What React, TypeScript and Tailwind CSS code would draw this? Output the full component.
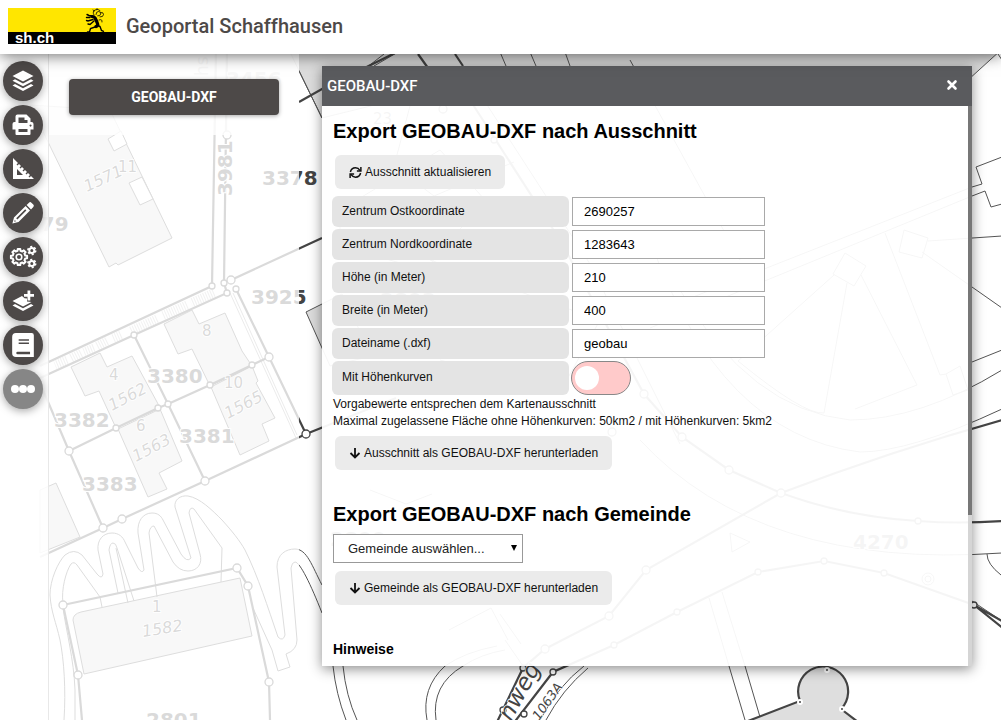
import { useState } from "react";
import type { ReactNode } from "react";

const circles: number[][] = [
  [212, 286, 3], [224, 283, 3], [231, 280, 4], [227, 293, 3], [236, 289, 3],
  [134, 335, 3], [269, 357, 4], [252, 365, 3], [210, 385, 3], [168, 404, 3],
  [158, 408, 3], [116, 428, 3], [69, 451, 4], [205, 481, 4], [122, 519, 4],
  [103, 528, 4], [306, 434, 4], [63, 605, 4], [237, 568, 4], [248, 586, 4],
  [269, 682, 4], [78, 675, 4], [227, 135, 4], [443, 109, 4], [494, 140, 3],
  [682, 437, 4], [729, 470, 4], [781, 493, 4], [918, 521, 3], [545, 649, 4],
  [609, 616, 4], [646, 570, 4], [614, 645, 3], [677, 612, 3], [758, 572, 3],
  [824, 561, 3], [884, 573, 3], [974, 605, 3], [644, 394, 4], [612, 432, 4],
  [523, 668, 3], [553, 672, 3], [503, 710, 3], [524, 714, 3],
];

const parcels: [number, number, string][] = [
  [262, 185, "3378"], [251, 304, "3925"], [147, 383, "3380"], [54, 427, "3382"],
  [179, 443, "3381"], [82, 491, "3383"], [146, 727, "2801"], [853, 549, "4270"],
  [226, 86, "3456"], [330, 546, "2800"], [380, 307, "2803"], [13, 231, "3379"],
];

function ParcelMap() {
  return (
    <svg
      aria-hidden="true"
      className="absolute inset-0 h-full w-full"
      viewBox="0 0 1001 720"
      preserveAspectRatio="xMinYMin slice"
      fontFamily="'DejaVu Sans', sans-serif"
    >
      <g fill="#dcdcdc" stroke="#555" strokeWidth="1">
        <path d="M286 44 322 118 460 84 968 80 1001 50V44Z" />
        <path d="M30 105 109 267l7-4 2 2 54-27-62-128Z" />
        <path d="M164 324l28-14 7 14 26-11 17 38 10 15-42 20-18-37-14 5Z" />
        <path d="M71 367l29-14 7 14 25-11 25 46 3 6-44 20-17-37-14 5Z" />
        <path d="M118 429l42-20 22 52-23 12 8 16-19 8Z" />
        <path d="M211 387l41-21 6 15-2 2 19 35-13 6 7 17-29 14Z" />
        <path d="M40 490l16-7 24 54-40 16Z" />
        <path d="M73 620q0-6 8-8l159-34 12 58-168 38Z" />
        <path d="M306 312l36-18 30 62-42 10Z" />
      </g>
      <g fill="#fff" stroke="#555">
        <path d="M108 139l13-8 6 13-13 7ZM129 183l13-6 11 22-13 6Z" />
      </g>

      <g fill="none" stroke="#555" strokeWidth="1">
        <path d="M230 293l66 145M233 293l64 142" opacity=".6" />
        <path d="M64 720C66 690 64 660 60 640 56 622 51 612 50 595 50 580 58 562 65 555Q74 548 82 555L97 574Q102 580 103 574L98 550C97 540 103 533 112 533 119 533 123 537 125 542L138 568Q142 574 144 570L138 533C137 521 143 513 152 513 158 513 161 516 163 520L181 554Q187 563 191 558L175 507C174 500 180 495 188 496 200 498 212 510 222 520 232 531 240 541 245 550 258 576 268 608 278 637Q283 642 285 635L277 567C277 554 286 549 295 549 307 549 312 566 322 585" />
        <path d="M63 603C61 590 66 571 71 564Q74 561 77 565L100 597 102 607M118 593 109 550Q110 543 113 543T117 548L134 601M116 548 128 603M157 597 149 533Q150 526 154 526L173 562Q179 571 188 571C197 571 203 564 200 554L189 513Q190 506 194 509L222 548 221 582M253 608 272 650 278 671 290 667 286 654Q297 650 297 640L291 568Q292 562 295 562C300 562 311 585 322 613" />
        <path d="M75 720V690C74 660 66 630 63 608" />
        <path d="M333 666q3 28 13 54M343 666q3 30 14 54M427 720q-6-32 18-54 20-14 52-20M436 720q-5-35 27-54 18-12 42-16M505 640l18 26M500 614l21 30M449 630l42-22 17 32M540 720q18-34 44-54M546 720q16-30 42-52" />
        <path d="M729 666l16 54M745 666l15 51M709 598l20 68M722 592l23 74" />
        <path d="M650 314L972 187l10-3-6-17 26-10M650 328L972 196l13-5 6 16 11-3M928 241l74-5M904 230l24 8-6 20-23-6ZM845 253l21 13-12 20-21-12ZM922 252l80 56M834 275l-96 86q66 54 86 52l23-130M861 275l56 110-62 24M885 233l55 142 6-1M946 374l14-8 8 24-15 5ZM972 362l30-12M680 290q70 120 170 130 70 0 152-50M650 240q70 195 210 212 50 0 142-43M640 440q120 130 362 113M987 554q0 10 14 21" />
        <path d="M366 68l18-14M374 66l24-14M500 52l6 14M530 52l6 14M565 52l5 14M299 71l23 47M410 106l-16 60 40 30 80-34M340 210l100-60 45 50-60 70-85-24ZM430 260l170 60-40 72-120-32M370 490l36 14 26-10M480 94l110 170 90 180M630 60l110 200M998 54l4 6M730 533l20 9-18 10ZM972 601l30 20" />
        <circle cx="928" cy="579" r="6" />
        <circle cx="928" cy="579" r="3" />
      </g>

      <g fill="none" stroke="#444" strokeWidth="2.2">
        <path d="M216 50l-4 236L40 366M227 50l-3 233 3 10-93 42-94 43M299 102l23-13 75-37M231 280l91-42" />
        <path d="M236 289l33 68 37 77-101 47-83 38-19 9-63 29M306 434l90-36M269 357l-17 8-42 20-42 19-10 4-42 20-47 23M134 335l34 69 37 77M40 383l29 68 34 77M63 605l174-37 11 18 21 96 1 38M63 605l15 70 4 45" />
        <path d="M418 54l10 14M455 54l8 12M470 100l90 140 84 154 38 43 47 33 52 23q66 24 137 28 40 3 84 0M781 493q110-42 221-73M781 493 646 570l-37 46-64 33-22 19-26 54M513 724l40-52 61-27 63-33 81-40 66-11 60 12 90 32 30 24M974 605l28 16" />
      </g>
      <g stroke="#555" strokeWidth="9" strokeDasharray="1 1.5" opacity=".4">
        <path d="M214 293l-23 10M187 305l-25 11M157 319l-26 12M121 335l-9 4M107 341l-10 5M94 348l-10 4M81 353l-10 5M67 360l-12 5" />
      </g>

      <path d="M750 720l50-19a25 25 0 1 1 42 8l16 12Z" fill="#dedede" />
      <path d="M748 721l52-20a25 25 0 1 1 41 8l17 13" fill="none" stroke="#444" strokeWidth="2.2" />
      <g fill="#444" stroke="#fff" strokeWidth="2">
        <circle cx="800" cy="702" r="2" />
        <circle cx="827" cy="670" r="2" />
        <circle cx="842" cy="709" r="2" />
      </g>

      <g fill="#fff" stroke="#444" strokeWidth="1.3">
        {circles.map(([x, y, r]) => (
          <circle key={`${x}-${y}`} cx={x} cy={y} r={r} />
        ))}
      </g>

      <g fill="#444" fontWeight="bold" fontSize="20" stroke="#fff" strokeWidth="2" paintOrder="stroke">
        {parcels.map(([x, y, label]) => (
          <text key={label} x={x} y={y}>{label}</text>
        ))}
        <text transform="translate(232 196) rotate(-90)">3981</text>
      </g>
      <g fill="#444" fontSize="15" stroke="#fff" strokeWidth="1.5" paintOrder="stroke">
        <text x="118" y="172">11</text>
        <text x="202" y="336">8</text>
        <text x="109" y="380">4</text>
        <text x="136" y="431">6</text>
        <text x="224" y="388">10</text>
        <text x="152" y="612">1</text>
        <text x="373" y="124">23</text>
        <g fontStyle="italic" fontSize="16">
          <text transform="translate(87 192) rotate(-25)">1571</text>
          <text transform="translate(112 411) rotate(-28)">1562</text>
          <text transform="translate(136 462) rotate(-28)">1563</text>
          <text transform="translate(228 419) rotate(-28)">1565</text>
          <text transform="translate(143 637) rotate(-9)">1582</text>
          <text transform="translate(539 721) rotate(-55)" fontSize="13">1063A</text>
        </g>
        <text transform="translate(511 722) rotate(-61)" fontStyle="italic" fontSize="23">nweg</text>
        <text transform="translate(208 76) rotate(-90)" fontSize="17">hs</text>
      </g>
    </svg>
  );
}

function Glyph({ children, className = "size-6" }: { children: ReactNode; className?: string }) {
  return (
    <svg viewBox="0 0 24 24" className={className} fill="currentColor" aria-hidden="true">
      {children}
    </svg>
  );
}

const gear = (cx: number, cy: number, r: number, teeth: number) => {
  const step = (Math.PI * 2) / teeth;
  const points: string[] = [];
  for (let i = 0; i < teeth; i++) {
    [[-0.3, 0.78], [-0.2, 1], [0.2, 1], [0.3, 0.78]].forEach(([turn, size]) => {
      const a = (i + turn) * step;
      points.push(`${(cx + Math.cos(a) * r * size).toFixed(2)},${(cy + Math.sin(a) * r * size).toFixed(2)}`);
    });
  }
  return points.join(" ");
};

const tools: { label: string; icon: ReactNode }[] = [
  {
    label: "Karten",
    icon: (
      <Glyph>
        <path d="M12 1.5 22.5 7 12 12.5 1.5 7Z" />
        <path d="M4 10.3 1.5 11.7 12 17.2l10.5-5.5L20 10.3l-8 4.2ZM4 15 1.5 16.4 12 22l10.5-5.6L20 15l-8 4.3Z" />
      </Glyph>
    ),
  },
  {
    label: "Drucken",
    icon: (
      <Glyph>
        <path
          fillRule="evenodd"
          d="M4.500 9V3.500q0-2 2-2h9l4 4V9h1q2 0 2 2v5.500h-3V21q0 1-1 1h-13q-1 0-1-1v-4.500h-3V11q0-2 2-2ZM7.500 4.500V10h9V7h-3V4.500ZM7.500 16v3h9v-3ZM19.500 11.500a1 1 0 1 0 .1 0Z"
        />
      </Glyph>
    ),
  },
  {
    label: "Messen",
    icon: (
      <Glyph>
        <path
          fillRule="evenodd"
          d="M2 1v21h21l-3-3-1.500 1.500-1-1L19 18l-2-2-1.500 1.500-1-1L16 15l-2-2-1.500 1.500-1-1L13 12l-2-2-1.500 1.500-1-1L10 9 8 7 6.500 8.500l-1-1L7 6ZM6 12l6 6H6Z"
        />
      </Glyph>
    ),
  },
  {
    label: "Zeichnen",
    icon: (
      <Glyph>
        <path d="M15.600 4l4.400 4.400L22.300 6q1.200-1.200 0-2.400l-1.900-1.900q-1.200-1.200-2.400 0Z" />
        <path fillRule="evenodd" d="M14.600 5 3 16.500l-1.600 6.100L7.500 21 19 9.400ZM14.200 8.200l1.200 1.200-9 9-1.200-1.200ZM3.800 19l1.200 1.200-1.800.6Z" />
      </Glyph>
    ),
  },
  {
    label: "Einstellungen",
    icon: (
      <svg viewBox="0 0 28 24" className="h-6 w-7 fill-none stroke-current stroke-2" aria-hidden="true">
        <polygon points={gear(10, 12, 8.2, 8)} strokeLinejoin="round" />
        <circle cx="10" cy="12" r="2.8" strokeWidth="1.600" />
        <circle cx="22.800" cy="5.500" r="2.500" />
        <circle cx="22.800" cy="5.500" r="3.900" strokeDasharray="2.040 2.040" strokeWidth="1.600" />
        <circle cx="22.800" cy="18.500" r="2.500" />
        <circle cx="22.800" cy="18.500" r="3.900" strokeDasharray="2.040 2.040" strokeWidth="1.600" />
      </svg>
    ),
  },
  {
    label: "Ebene hinzufügen",
    icon: (
      <Glyph>
        <path d="M16.500 1.500h2.800V5H23v2.800h-3.700v3.600h-2.800V7.800H13V5h3.500Z" />
        <path d="M11 7l2.500 2.300 2.500.3v3l4.500.4-8.500 4.500L1.500 12Z" />
        <path d="M4 15l-2.500 1.500L12 22l10.500-5.500L20 15l-8 4.300Z" />
      </Glyph>
    ),
  },
  {
    label: "Hilfe",
    icon: (
      <Glyph className="size-[26px]">
        <path
          fillRule="evenodd"
          d="M5.500 1H20q2 0 2 2v20H5.500Q2 23 2 19.500v-15Q2 1 5.500 1ZM7 18.200q-1.200 0-1.200 1.200T7 20.600h11.500v-2.400ZM8 6.800V8h9.500V6.800ZM8 9.800V11h9.500V9.800Z"
        />
      </Glyph>
    ),
  },
  {
    label: "Mehr",
    icon: (
      <Glyph>
        <circle cx="4" cy="12" r="4" />
        <circle cx="12" cy="12" r="4" />
        <circle cx="20" cy="12" r="4" />
      </Glyph>
    ),
  },
];

function Logo() {
  return (
    <a href="#start" aria-label="sh.ch" className="relative block h-9 w-[108px] overflow-hidden bg-[#ffe600]">
      <span className="absolute inset-x-0 bottom-0 h-3 bg-black" />
      <span className="absolute bottom-0 left-[7px] font-['Liberation_Sans',sans-serif] text-[15px] leading-[12px] font-bold text-white">
        sh.ch
      </span>
      <svg viewBox="0 0 22 25" className="absolute top-0 right-[10px] h-[25px] w-[22px]" fill="none" stroke="#000" strokeLinecap="round" aria-hidden="true">
        <path d="M8 8.500q3 0 4 3.500l1.500 3.500q1 2-1.500 3" strokeWidth="3.200" />
        <path d="M9 11.500 4 13l-1.500-.5M10 13l-4 3.500-2-.5M13 17l3 1.500 1.500 4 2 .8M11 19l-4.500 1.500L5.500 24H3.500M8 8 5 7.500 3 6.500M6 9.500 2.500 9.500" strokeWidth="1.400" />
        <path d="M10 7q-2-3.500 1-5 3-1.500 5 .5M10.500 3 9 2M13 1.500V.7M12 6.500q0-3 2.500-3t2.200 2.400-3 2M17 4.500q2.500-.5 2.500 2t-3.500 2.500M15 12q3.500-1.500 3 2" strokeWidth=".8" />
      </svg>
    </a>
  );
}

function DownArrow() {
  return (
    <svg viewBox="0 0 12 12" className="size-3 fill-none stroke-current" strokeWidth="1.800" aria-hidden="true">
      <path d="M6 1v10M1.500 6 6 10.500 10.500 6" />
    </svg>
  );
}

const actionClass =
  "ml-[2px] flex h-[34px] w-fit items-center gap-[3px] rounded-md bg-[#ebebeb] px-[14px] text-xs text-[#111]";

const fields = [
  { id: "ost", label: "Zentrum Ostkoordinate", value: "2690257" },
  { id: "nord", label: "Zentrum Nordkoordinate", value: "1283643" },
  { id: "hoehe", label: "Höhe (in Meter)", value: "210" },
  { id: "breite", label: "Breite (in Meter)", value: "400" },
  { id: "datei", label: "Dateiname (.dxf)", value: "geobau" },
];

function ExportWindow({ onClose }: { onClose: () => void }) {
  return (
    <section
      aria-label="GEOBAU-DXF"
      className="absolute top-3 right-[29px] bottom-[54px] left-[322px] flex flex-col shadow-[0_3px_12px_rgba(0,0,0,0.45)]"
    >
      <header className="flex h-10 shrink-0 items-center justify-between bg-[#5a5b5e] pr-[14px] pl-[5px] text-white">
        <h2 className="text-[15px] font-medium">GEOBAU-DXF</h2>
        <button type="button" aria-label="Schliessen" onClick={onClose} className="pb-[2px]">
          <svg viewBox="0 0 12 12" className="size-3 stroke-current" strokeWidth="2.600" strokeLinecap="round" aria-hidden="true">
            <path d="M2.500 2.500l7 7M9.500 2.500l-7 7" />
          </svg>
        </button>
      </header>
      <div className="flex min-h-0 flex-1">
        <div className="flex-1 overflow-hidden bg-white/95 pt-[11px] pl-[11px] font-['Liberation_Sans',Arial,sans-serif] text-xs text-[#111]">
          <h3 className="text-xl leading-7 font-bold text-black">Export GEOBAU-DXF nach Ausschnitt</h3>
          <button type="button" className={`${actionClass} mt-[10px]`}>
            <svg viewBox="0 0 14 14" className="size-[13px] fill-none stroke-current" strokeWidth="1.600" aria-hidden="true">
              <path d="M1.500 6.500Q2.500 2 7 2q3 0 5 3M12.500 7.500Q11.500 12 7 12q-3 0-5-3" />
              <path d="M12.800 1v4.300H8.500M1.200 13V8.700H5.500" />
            </svg>
            Ausschnitt aktualisieren
          </button>
          <div className="mt-[7px] -ml-px flex flex-col gap-[2px]">
            {fields.map((f) => (
              <div key={f.id} className="flex items-center gap-[3px]">
                <label htmlFor={f.id} className="h-[31px] w-[237px] rounded-md bg-[#e3e3e3]/95 pl-[10px] leading-[30px]">
                  {f.label}
                </label>
                <input
                  id={f.id}
                  defaultValue={f.value}
                  className="h-[29px] w-[193px] border border-[#a9a9a9] bg-white px-[11px] text-[13px] text-black"
                />
              </div>
            ))}
            <div className="flex items-center gap-[2px]">
              <label htmlFor="kurven" className="h-[34px] w-[237px] rounded-md bg-[#e3e3e3]/95 pl-[10px] leading-[32px]">
                Mit Höhenkurven
              </label>
              <input
                id="kurven"
                type="checkbox"
                className="h-[34px] w-[60px] appearance-none rounded-full border border-[#888] bg-[#ffcaca] px-[3px] py-[4px] before:block before:size-6 before:rounded-full before:bg-white checked:bg-[#caffca] checked:before:ml-auto"
              />
            </div>
          </div>
          <p className="pt-px leading-[17px]">
            Vorgabewerte entsprechen dem Kartenausschnitt
            <br />
            Maximal zugelassene Fläche ohne Höhenkurven: 50km2 / mit Höhenkurven: 5km2
          </p>
          <button type="button" className={`${actionClass} mt-[6px]`}>
            <DownArrow />
            Ausschnitt als GEOBAU-DXF herunterladen
          </button>
          <h3 className="mt-[30px] text-xl leading-7 font-bold text-black">Export GEOBAU-DXF nach Gemeinde</h3>
          <div className="relative mt-[6px] w-[190px]">
            <select
              aria-label="Gemeinde"
              className="block h-[29px] w-full appearance-none border border-[#999] bg-white pl-[14px] text-[13px] text-[#222]"
            >
              <option>Gemeinde auswählen...</option>
            </select>
            <svg viewBox="0 0 6 7" className="pointer-events-none absolute top-[11px] right-[6px] h-[7px] w-[6px]" aria-hidden="true">
              <path d="M0 0h6L3 6Z" />
            </svg>
          </div>
          <button type="button" className={`${actionClass} mt-2`}>
            <DownArrow />
            Gemeinde als GEOBAU-DXF herunterladen
          </button>
          <h4 className="mt-9 text-sm leading-4 font-bold text-black">Hinweise</h4>
        </div>
        <div className="w-1 bg-[#d5d5d5]">
          <div className="h-[73%] bg-[#777]" />
        </div>
      </div>
    </section>
  );
}

export default function App() {
  const [open, setOpen] = useState(true);
  return (
    <div className="relative flex h-screen flex-col overflow-hidden bg-white font-[Roboto,sans-serif]">
      <ParcelMap />
      <header className="relative z-10 flex h-[54px] shrink-0 items-center gap-[10px] bg-white px-2 pb-[2px] shadow-[0_2px_14px_rgba(0,0,0,0.55)]">
        <Logo />
        <h1 className="text-xl font-medium text-[#4d4948]">Geoportal Schaffhausen</h1>
      </header>
      <main className="relative flex min-h-0 flex-1">
        <nav aria-label="Werkzeuge" className="flex w-[49px] flex-col gap-1 border-r border-[#e8e8e8] bg-white/97 pt-[7px] pl-[3px]">
          {tools.map((t) => (
            <button
              key={t.label}
              type="button"
              aria-label={t.label}
              className="flex size-10 items-center justify-center rounded-full bg-[#4d4948] text-white shadow-[0_2px_8px_rgba(0,0,0,0.35)] last:bg-[#868686]"
            >
              {t.icon}
            </button>
          ))}
        </nav>
        <aside className="w-[250px] bg-white/80">
          <div className="bg-white/80 px-5 pt-[25px] pb-5">
            <button
              type="button"
              onClick={() => setOpen(true)}
              className="block h-9 w-full rounded-sm bg-[#4d4948] text-sm font-bold text-white shadow-[0_1px_4px_rgba(0,0,0,0.35)]"
            >
              GEOBAU-DXF
            </button>
          </div>
        </aside>
        {open && <ExportWindow onClose={() => setOpen(false)} />}
      </main>
    </div>
  );
}
